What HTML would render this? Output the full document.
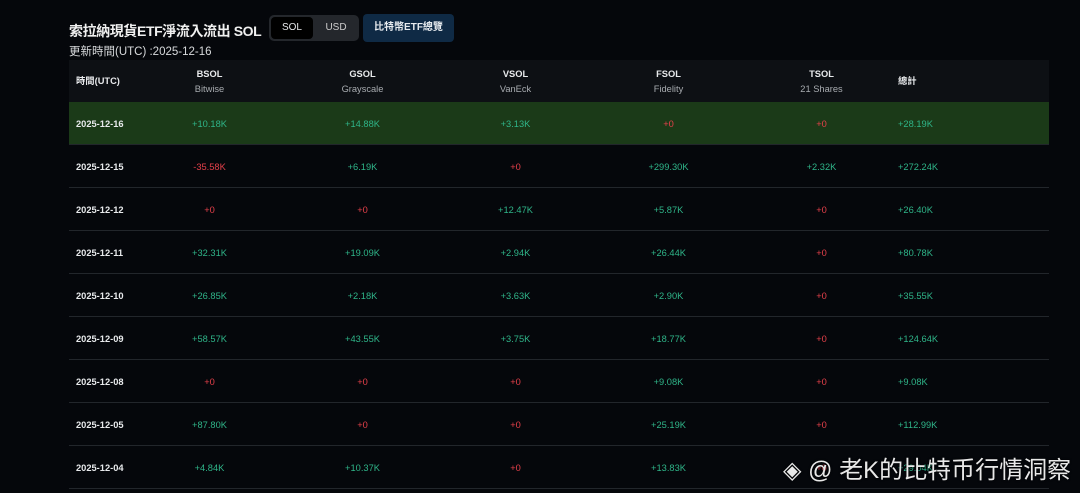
<!DOCTYPE html>
<html><head><meta charset="utf-8"><style>
body{margin:0;width:1080px;height:493px;background:#05070b;font-family:"Liberation Sans","Noto Sans CJK TC",sans-serif;color:#e6e8ea;overflow:hidden;position:relative}
.t{position:absolute;left:69px;top:21px;font-size:14px;letter-spacing:-0.4px;font-weight:bold;color:#f0f0f0;white-space:nowrap}
.u{position:absolute;left:69px;top:43px;font-size:11.5px;color:#d8dadc}
.seg{position:absolute;left:269px;top:15px;width:90px;height:26px;background:#24272c;border-radius:5px}
.seg .a{position:absolute;left:2px;top:2px;width:42px;height:22px;background:#000;border-radius:4px;font-size:10px;line-height:22px;text-align:center}
.seg .b{position:absolute;left:46px;top:2px;width:42px;height:22px;font-size:10px;line-height:22px;text-align:center;color:#ccc}
.btn{position:absolute;left:363px;top:14px;width:91px;height:28px;background:#0f2a45;border-radius:4px;font-size:10px;font-weight:bold;line-height:28px;text-align:center;color:#e8ecf0}
table{position:absolute;left:69px;top:60px;width:980px;border-collapse:collapse;font-size:9.3px;table-layout:fixed}
th,td{padding:0;white-space:nowrap}
th{height:41px;background:#0d1014;font-weight:bold;color:#e8eaec;line-height:15px;padding-top:1px}
th span{font-weight:normal;color:#a8acb0}
td{height:40px;border-bottom:1px solid #22262b;text-align:center;padding-top:2px}
td:first-child,th:first-child{text-align:left;padding-left:7px;font-weight:bold;color:#e8eaec}
td:last-child,th:last-child{text-align:left}
tr.g td{background:#1b3a18}
.p{color:#2fb589}.n{color:#e5404a}
.wm{position:absolute;left:783px;top:450px;font-size:24px;color:#e8e8e8;text-shadow:0 0 2px #000;white-space:nowrap}
</style></head><body>
<div class="t">索拉納現貨ETF淨流入流出 SOL</div>
<div class="seg"><div class="a">SOL</div><div class="b">USD</div></div>
<div class="btn">比特幣ETF總覽</div>
<div class="u">更新時間(UTC) :2025-12-16</div>
<table>
<colgroup><col style="width:64px"><col style="width:153px"><col style="width:153px"><col style="width:153px"><col style="width:153px"><col style="width:153px"><col style="width:151px"></colgroup>
<tr><th>時間(UTC)</th><th>BSOL<br><span>Bitwise</span></th><th>GSOL<br><span>Grayscale</span></th><th>VSOL<br><span>VanEck</span></th><th>FSOL<br><span>Fidelity</span></th><th>TSOL<br><span>21 Shares</span></th><th>總計</th></tr>
<tr class="g"><td>2025-12-16</td><td class="p">+10.18K</td><td class="p">+14.88K</td><td class="p">+3.13K</td><td class="n">+0</td><td class="n">+0</td><td class="p">+28.19K</td></tr>
<tr><td>2025-12-15</td><td class="n">-35.58K</td><td class="p">+6.19K</td><td class="n">+0</td><td class="p">+299.30K</td><td class="p">+2.32K</td><td class="p">+272.24K</td></tr>
<tr><td>2025-12-12</td><td class="n">+0</td><td class="n">+0</td><td class="p">+12.47K</td><td class="p">+5.87K</td><td class="n">+0</td><td class="p">+26.40K</td></tr>
<tr><td>2025-12-11</td><td class="p">+32.31K</td><td class="p">+19.09K</td><td class="p">+2.94K</td><td class="p">+26.44K</td><td class="n">+0</td><td class="p">+80.78K</td></tr>
<tr><td>2025-12-10</td><td class="p">+26.85K</td><td class="p">+2.18K</td><td class="p">+3.63K</td><td class="p">+2.90K</td><td class="n">+0</td><td class="p">+35.55K</td></tr>
<tr><td>2025-12-09</td><td class="p">+58.57K</td><td class="p">+43.55K</td><td class="p">+3.75K</td><td class="p">+18.77K</td><td class="n">+0</td><td class="p">+124.64K</td></tr>
<tr><td>2025-12-08</td><td class="n">+0</td><td class="n">+0</td><td class="n">+0</td><td class="p">+9.08K</td><td class="n">+0</td><td class="p">+9.08K</td></tr>
<tr><td>2025-12-05</td><td class="p">+87.80K</td><td class="n">+0</td><td class="n">+0</td><td class="p">+25.19K</td><td class="n">+0</td><td class="p">+112.99K</td></tr>
<tr><td>2025-12-04</td><td class="p">+4.84K</td><td class="p">+10.37K</td><td class="n">+0</td><td class="p">+13.83K</td><td class="n">+0</td><td class="p">+29.04K</td></tr>
</table>
<div class="wm">◈ @ 老K的比特币行情洞察</div>
</body></html>
